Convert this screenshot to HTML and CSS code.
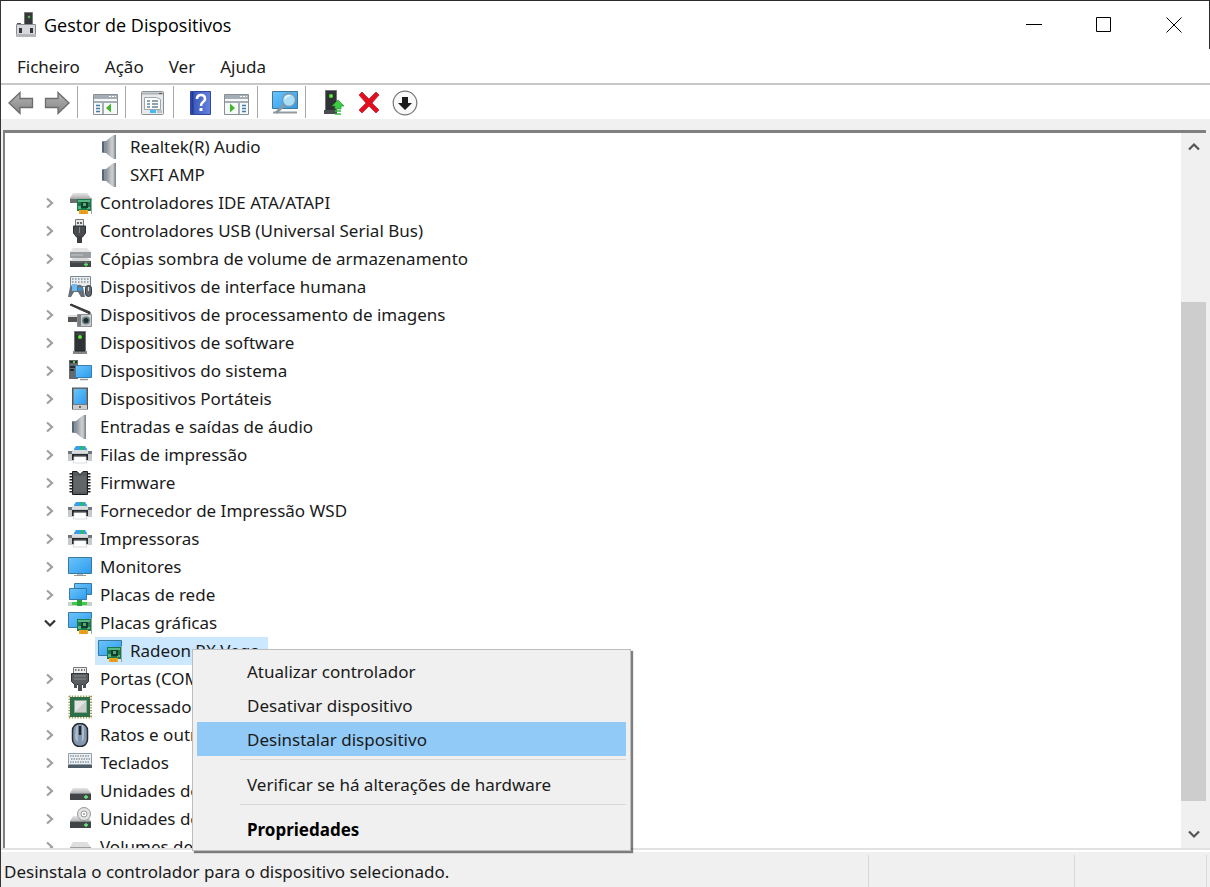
FILE: index.html
```
<!DOCTYPE html>
<html lang="pt">
<head>
<meta charset="utf-8">
<title>Gestor de Dispositivos</title>
<link rel="stylesheet" href="styles.css">
</head>
<body>
<svg class="defs" aria-hidden="true">
  <defs>
    <linearGradient id="gScreen" x1="0" y1="0" x2="1" y2="1"><stop offset="0" stop-color="#6cc4fa"/><stop offset="1" stop-color="#2b9cf0"/></linearGradient>
    <linearGradient id="gMetal" x1="0" y1="0" x2="1" y2="0"><stop offset="0" stop-color="#8a9096"/><stop offset=".6" stop-color="#cdd0d3"/><stop offset="1" stop-color="#9da1a6"/></linearGradient>
    <linearGradient id="gArrow" x1="0" y1="0" x2="0" y2="1"><stop offset="0" stop-color="#b4b4b4"/><stop offset="1" stop-color="#858585"/></linearGradient>
    <linearGradient id="gHelp" x1="0" y1="0" x2="1" y2="0"><stop offset="0" stop-color="#3552b4"/><stop offset="1" stop-color="#6484e0"/></linearGradient>
    <linearGradient id="gDisk" x1="0" y1="0" x2="0" y2="1"><stop offset="0" stop-color="#e6e6e6"/><stop offset="1" stop-color="#b5b5b5"/></linearGradient>
  </defs>
  <symbol id="speaker" viewBox="0 0 24 24">
    <path d="M4 6h6v12H4z" fill="#8792a0"/><path d="M4 7h2v10H4z" fill="#566474"/>
    <path d="M8 6 14 1l2-1h2v24h-2l-2-1-6-5z" fill="url(#gMetal)"/><path d="M16.500 0H18v24h-1.500z" fill="#878b90"/>
  </symbol>
  <symbol id="card" viewBox="0 0 24 24">
    <path d="M9 8h15v12H9z" fill="#1c7a4a"/><path d="M10 9h12v2H10zM10 15h3v3h-3zM19 16h3v2h-3z" fill="#56b884"/>
    <path d="M13 11h7v6h-7z" fill="#123e2c"/><path d="M15 12h3v3h-3z" fill="#58a47c"/>
    <path d="M11 19h9v4h-9z" fill="#f0a51d"/><path d="M14 20v3M17 20v3" stroke="#b87911" stroke-width=".6"/><path d="M23 7h1v16h-1z" fill="#9ca5a0"/>
  </symbol>
  <symbol id="ide" viewBox="0 0 24 24">
    <path d="M5 2h14l4 5H2z" fill="url(#gDisk)"/><path d="M2 7h21v5H2z" fill="#6b6e70"/><path d="M2 7h21v1H2z" fill="#aaa"/><use href="#card"/>
  </symbol>
  <symbol id="usb" viewBox="0 0 24 24">
    <path d="M7.500.5h8v7h-8z" fill="#e8e8e8" stroke="#777"/><path d="M9 3h2v2H9zM12 3h2v2h-2z" fill="#666"/>
    <path d="M5.500 7h12v7l-3 4h-6l-3-4z" fill="#484b50" stroke="#2d2f33"/><path d="M9 18h5v6H9z" fill="#3c3e42"/><path d="M11.500 8v6" stroke="#888"/>
  </symbol>
  <symbol id="storage" viewBox="0 0 24 24">
    <path d="M5 1h14l4 4H2z" fill="#e4e4e4"/><path d="M2 5h21v6H2z" fill="#999da0"/><path d="M3 8h12" stroke="#c5c7c8"/>
    <path d="M5 11h14l4 3H2z" fill="#d9d9d9"/><path d="M2 14h21v6H2z" fill="#414547"/><path d="M3 15h19" stroke="#70777a"/><path d="M16 17.500h4M18 15.500v4" stroke="#5be36d" stroke-width="1.300"/>
  </symbol>
  <symbol id="hid" viewBox="0 0 24 24">
    <path d="M2.500 1.500h20v10h-20z" fill="#ececec" stroke="#75899a"/><path d="M4 4h17M4 7h17" stroke="#81919c" stroke-width="1.600" stroke-dasharray="1.500 1.500"/>
    <path d="M2 12q3-4 6-1 4-3 7 1l2 10h-4l-3-5H6l-3 5H0z" fill="#666e77"/><path d="M4 9h5v7H4z" fill="#69bdf4"/><circle cx="12" cy="14" r="2" fill="#3896dc"/>
    <rect x="17.500" y="10.500" width="6" height="11" rx="3" fill="#616870" stroke="#30363c"/><path d="M20.500 12v4" stroke="#d0d6dc"/>
  </symbol>
  <symbol id="imaging" viewBox="0 0 24 24">
    <path d="M3 1 22 9v2L2 2z" fill="#444" stroke="#333"/><path d="M0 14h10v5H0z" fill="#555"/><path d="M0 13h11" stroke="#ddd" stroke-width="2"/>
    <path d="M9.500 11.500h14v12h-14z" fill="#c7cacb" stroke="#8b8e90"/><path d="M10 12h3v11h-3z" fill="#777d80"/><circle cx="18" cy="17.500" r="4" fill="#707d7f"/><circle cx="18" cy="17.500" r="2.500" fill="#193037"/><path d="M21 13h2" stroke="#eee"/>
  </symbol>
  <symbol id="tower" viewBox="0 0 24 24">
    <path d="M6.500.5h11v20h-11z" fill="#303336" stroke="#717476"/><path d="M8 3h8" stroke="#555"/><circle cx="12" cy="6" r="2" fill="#54ea39"/><path d="M5 20h14v3H5z" fill="#85888a"/><path d="M7 20h10" stroke="#222"/>
  </symbol>
  <symbol id="system" viewBox="0 0 24 24">
    <path d="M1 1h9v19H1z" fill="#65696c"/><path d="M2 3h7M2 8h5M2 11h4" stroke="#25292c" stroke-width="2"/><path d="M5 3h2" stroke="#51d64c" stroke-width="2"/>
    <path d="M7.500 6.500h16v12h-16z" fill="url(#gScreen)" stroke="#397eaf"/><path d="M12 20.500h8" stroke="#8f979c" stroke-width="1.500"/>
  </symbol>
  <symbol id="portable" viewBox="0 0 24 24">
    <rect x="4.500" y="1" width="15" height="21" fill="#777b80" stroke="#51565b"/><path d="M6 2h12v15H6z" fill="url(#gScreen)"/><path d="M5 18h14v4H5z" fill="#ccc"/><path d="M11 19h2v2h-2z" fill="#666"/>
  </symbol>
  <symbol id="printer" viewBox="0 0 24 24">
    <path d="M6 6 8 3h9l2 3v2H6z" fill="#3c9cec"/><path d="M12 3h4v5h-4z" fill="#2fb67b"/>
    <path d="M0 8h24v10H0z" fill="#c6cacc"/><path d="M0 8h4v3H0zM20 8h4v3h-4z" fill="#70767a"/><path d="M4 7h16v3H4z" fill="#dadddf"/>
    <path d="M4 11h16v6h-2v-3H6v3H4z" fill="#25292b"/><path d="M6 13h12v4l1 3H5l1-3z" fill="#fff" stroke="#d0d4d5" stroke-width=".8"/><path d="M5 13h14" stroke="#25292b"/>
  </symbol>
  <symbol id="chip" viewBox="0 0 24 24">
    <path d="M3 2v21M21 2v21" stroke="#222" stroke-width="3" stroke-dasharray="1.600 1.400"/><path d="M4.500.5H9l3 3 3-3h4.500v23h-15z" fill="#55585b" stroke="#191b1d"/><path d="M6 5h12v16H6z" fill="#626568"/>
  </symbol>
  <symbol id="monitor" viewBox="0 0 24 24">
    <path d="M.5 2.500h23v16H.5z" fill="url(#gScreen)" stroke="#3b789d"/><path d="M9 19.500h6" stroke="#bbb"/><path d="M6 20.500h12" stroke="#92999c"/>
  </symbol>
  <symbol id="network" viewBox="0 0 24 24">
    <path d="M6.500.5h17v11h-17z" fill="url(#gScreen)" stroke="#39789f"/><path d="M1.500 5.500h17v11h-17z" fill="url(#gScreen)" stroke="#39789f"/>
    <path d="M0 19h24v4H0z" fill="#c7d2ca"/><path d="M4 19h15v3H4z" fill="#3bcb47"/><path d="M9 17h5v6H9z" fill="#29a438"/>
  </symbol>
  <symbol id="display" viewBox="0 0 24 24">
    <path d="M.5 1.500h23v15H.5z" fill="url(#gScreen)" stroke="#3b789d"/><use href="#card"/>
  </symbol>
  <symbol id="port" viewBox="0 0 24 24">
    <path d="M5.500.5h13v6h-13z" fill="#eee" stroke="#777"/><path d="M7 3h10" stroke="#777" stroke-width="2" stroke-dasharray="1.500 1.500"/>
    <path d="M3.500 6.500h17v8l-3 3h-11l-3-3z" fill="#5a5d60" stroke="#333"/><path d="M6 9h12M6 12h12" stroke="#898c8f"/><path d="M6 17h3v4H6zM15 17h3v4h-3zM10 17h4v7h-4z" fill="#4c4f52"/>
  </symbol>
  <symbol id="cpu" viewBox="0 0 24 24">
    <path d="M1 1.500h23M1 22.500h23M1.500 1v22M23 1v22" stroke="#a59a51" stroke-width="2" stroke-dasharray="1.300 1.500"/><path d="M2 2h20v20H2z" fill="#2c6f49"/><path d="M6.500 5.500h12v12h-12z" fill="#e4e5e3" stroke="#8bab97"/><path d="m7 17 11-11v11z" fill="#c9cecb"/>
  </symbol>
  <symbol id="mouse" viewBox="0 0 24 24">
    <rect x="4.500" y=".5" width="15" height="23" rx="7" fill="#8297ad" stroke="#25282d" stroke-width="1.500"/><path d="M8 4q1-2 2-2v17q-3-2-3-5zM14 2q2 0 2 3v9q0 3-2 5z" fill="#acbccd"/><path d="M12 3v9" stroke="#20252b" stroke-width="2.500"/>
  </symbol>
  <symbol id="keyboard" viewBox="0 0 24 24">
    <path d="M.5 2.500h23v11H.5z" fill="#edf0f2" stroke="#93a0a9"/><path d="M2 5h20M3 8h19M2 11h20" stroke="#8798a4" stroke-width="1.500" stroke-dasharray="1.500 1"/><path d="M0 14h24v3H0z" fill="#4c5b66"/>
  </symbol>
  <symbol id="drive" viewBox="0 0 24 24">
    <path d="M5 9h14l4 5H2z" fill="url(#gDisk)"/><path d="M2 14h21v7H2z" fill="#424548"/><path d="M2 14.500h21" stroke="#858a8c"/><path d="M16 18h4M18 16v4" stroke="#6af37b" stroke-width="1.300"/>
  </symbol>
  <symbol id="optical" viewBox="0 0 24 24">
    <use href="#drive"/><circle cx="16" cy="7" r="6.500" fill="#e1e3e4" stroke="#999"/><circle cx="16" cy="7" r="3" fill="#fff" stroke="#999"/><circle cx="16" cy="7" r="1" fill="#999"/>
  </symbol>
  <symbol id="volume" viewBox="0 0 24 24">
    <path d="M5 7h14l4 5H2z" fill="#dedede"/><path d="M2 12h21v8H2z" fill="#9b9fa1"/>
  </symbol>
  <symbol id="right" viewBox="0 0 12 12"><path d="m3 1.500 5 4.500-5 4.500" fill="none" stroke="currentColor" stroke-width="2.200"/></symbol>
  <symbol id="down" viewBox="0 0 12 12"><path d="m1 3.500 5 5 5-5" fill="none" stroke="currentColor" stroke-width="2.200"/></symbol>
</svg>

<div class="window">
  <header class="titlebar">
    <svg class="app-icon" viewBox="0 0 22 26" aria-hidden="true">
      <path d="M9.500.5h8v13h-8z" fill="#343839" stroke="#777"/><circle cx="14" cy="5" r="1.300" fill="#4db64f"/>
      <path d="M2 11h4v3H2z" fill="#555"/><path d="M1.500 12.500h19v12h-19z" fill="#d8d9dc" stroke="#8a8b90"/><path d="M1 22h20v3H1z" fill="#b5b6bb"/><path d="M4 16h3v5H4zM15 16h3v5h-3z" fill="#33363a"/>
    </svg>
    <h1 class="title">Gestor de Dispositivos</h1>
    <div class="controls">
      <button class="control" aria-label="Minimizar"><svg viewBox="0 0 16 16"><path d="M0 7.500h16"/></svg></button>
      <button class="control" aria-label="Maximizar"><svg viewBox="0 0 16 16"><path d="M.5.500h14v14H.500z"/></svg></button>
      <button class="control" aria-label="Fechar"><svg viewBox="0 0 16 16"><path d="m.5.500 15 15M15.500.500l-15 15"/></svg></button>
    </div>
  </header>

  <nav class="menubar">
    <button class="menu">Ficheiro</button>
    <button class="menu">Ação</button>
    <button class="menu">Ver</button>
    <button class="menu">Ajuda</button>
  </nav>

  <div class="toolbar" role="toolbar">
    <button class="tool" aria-label="Retroceder"><svg viewBox="0 0 26 26"><path d="M1 13 12 2.500v6h12.500v9H12v6z" fill="url(#gArrow)" stroke="#6c6c6c" stroke-width="1.300"/></svg></button>
    <button class="tool" aria-label="Avançar"><svg viewBox="0 0 26 26"><path d="M25 13 14 2.500v6H1.500v9H14v6z" fill="url(#gArrow)" stroke="#6c6c6c" stroke-width="1.300"/></svg></button>
    <span class="divider"></span>
    <button class="tool" aria-label="Mostrar árvore"><svg viewBox="0 0 26 26"><path d="M1.500 4.500h24v20h-24z" fill="#f7f8f8" stroke="#888f96"/><path d="M2 5h23v4H2z" fill="#a5adb5"/><path d="M17 6.500h2M20 6.500h2M23 6.500h1" stroke="#fff"/><path d="M2 11h23v2H2zM10 12h2v12h-2z" fill="#a5adb5"/><path d="M4 15.500h4M4 18.500h4M4 21.500h4" stroke="#427da5" stroke-width="1.400"/><path d="M19 13.500v9L14 18z" fill="#43b52e"/></svg></button>
    <span class="divider"></span>
    <button class="tool" aria-label="Propriedades"><svg viewBox="0 0 26 26"><rect x="1.500" y="1.500" width="22" height="23" rx="1" fill="#e7e9ea" stroke="#8a9096"/><path d="M2 3.500h21" stroke="#aab1b7" stroke-width="2"/><path d="M19 3.500h3" stroke="#555"/><path d="M4.500 7.500h12l4 2v10h-16z" fill="#fff" stroke="#9ba6ae"/><path d="M7 11h3M12 11h6M7 14h3M12 14h6M7 17h3M12 17h6" stroke="#6a8296" stroke-width="1.300"/><path d="M10 20h6v3h-6z" fill="#43baf0"/><path d="M17 20h5v3h-5z" fill="#bcc3c8"/></svg></button>
    <span class="divider"></span>
    <button class="tool" aria-label="Ajuda"><svg viewBox="0 0 26 26"><path d="M2.500 1.500h20v23h-20z" fill="url(#gHelp)" stroke="#34489b"/><path d="M4.500 2v22" stroke="#1e3c99" stroke-width="2"/><path d="M9 9q0-4 4-4t4 4q0 2-2 3-2 1.500-2 4" fill="none" stroke="#fff" stroke-width="2.600"/><path d="M11.500 18h3v3h-3z" fill="#fff"/></svg></button>
    <button class="tool" aria-label="Mostrar painel de ações"><svg viewBox="0 0 26 26"><path d="M.5 4.500h24v20H.5z" fill="#f7f8f8" stroke="#888f96"/><path d="M1 5h23v4H1z" fill="#a5adb5"/><path d="M16 6.500h2M19 6.500h2M22 6.500h1" stroke="#fff"/><path d="M1 11h23v2H1zM14 12h2v12h-2z" fill="#a5adb5"/><path d="M18 15.500h4M18 18.500h4M18 21.500h4" stroke="#427da5" stroke-width="1.400"/><path d="M6 13.500v9l5-4.500z" fill="#43b52e"/></svg></button>
    <span class="divider"></span>
    <button class="tool" aria-label="Procurar alterações de hardware"><svg viewBox="0 0 26 26"><path d="M.5 1.500h25v17H.5z" fill="url(#gScreen)" stroke="#407894"/><path d="M1 22.500h24" stroke="#949a9e" stroke-width="2"/><path d="m12 15-8 8" stroke="#8998a2" stroke-width="3"/><circle cx="17" cy="10" r="6.500" fill="#a9def6" stroke="#7994a6" stroke-width="1.300"/><path d="M13 9q1-4 5-3" fill="none" stroke="#e5f8ff" stroke-width="1.500"/></svg></button>
    <span class="divider"></span>
    <button class="tool" aria-label="Atualizar controlador"><svg viewBox="0 0 26 26"><path d="M5.500.500h11v20h-11z" fill="#303336" stroke="#717476"/><circle cx="11" cy="6" r="2" fill="#54ea39"/><path d="M4 20h13v4H4z" fill="#4a4d50"/><path d="m18 10 6 6h-3v3h-6v-3h-3z" fill="#3ccc43" stroke="#279230" stroke-width=".7"/><path d="M15 21h6M15 24h6" stroke="#36bd3c" stroke-width="1.600"/></svg></button>
    <button class="tool" aria-label="Desinstalar dispositivo"><svg viewBox="0 0 26 26"><path d="m3 5 3-3 7 7 7-7 3 3-7 8 7 7-3 3-7-7-7 7-3-3 7-7z" fill="#e11020" stroke="#bc1621" stroke-width=".7"/></svg></button>
    <button class="tool" aria-label="Desativar dispositivo"><svg viewBox="0 0 26 26"><circle cx="13" cy="13" r="11.800" fill="#f8f8f8" stroke="#74777a" stroke-width="1.200"/><path d="M10 7h6v6h4l-7 7-7-7h4z" fill="#1b1b1b"/></svg></button>
  </div>

  <main class="pane">
    <ul class="tree" role="tree">
      <li class="row child"><svg class="icon"><use href="#speaker"/></svg><span class="label">Realtek(R) Audio</span></li>
      <li class="row child"><svg class="icon"><use href="#speaker"/></svg><span class="label">SXFI AMP</span></li>
      <li class="row"><button class="toggle" aria-label="Expandir"><svg><use href="#right"/></svg></button><svg class="icon"><use href="#ide"/></svg><span class="label">Controladores IDE ATA/ATAPI</span></li>
      <li class="row"><button class="toggle" aria-label="Expandir"><svg><use href="#right"/></svg></button><svg class="icon"><use href="#usb"/></svg><span class="label">Controladores USB (Universal Serial Bus)</span></li>
      <li class="row"><button class="toggle" aria-label="Expandir"><svg><use href="#right"/></svg></button><svg class="icon"><use href="#storage"/></svg><span class="label">Cópias sombra de volume de armazenamento</span></li>
      <li class="row"><button class="toggle" aria-label="Expandir"><svg><use href="#right"/></svg></button><svg class="icon"><use href="#hid"/></svg><span class="label">Dispositivos de interface humana</span></li>
      <li class="row"><button class="toggle" aria-label="Expandir"><svg><use href="#right"/></svg></button><svg class="icon"><use href="#imaging"/></svg><span class="label">Dispositivos de processamento de imagens</span></li>
      <li class="row"><button class="toggle" aria-label="Expandir"><svg><use href="#right"/></svg></button><svg class="icon"><use href="#tower"/></svg><span class="label">Dispositivos de software</span></li>
      <li class="row"><button class="toggle" aria-label="Expandir"><svg><use href="#right"/></svg></button><svg class="icon"><use href="#system"/></svg><span class="label">Dispositivos do sistema</span></li>
      <li class="row"><button class="toggle" aria-label="Expandir"><svg><use href="#right"/></svg></button><svg class="icon"><use href="#portable"/></svg><span class="label">Dispositivos Portáteis</span></li>
      <li class="row"><button class="toggle" aria-label="Expandir"><svg><use href="#right"/></svg></button><svg class="icon"><use href="#speaker"/></svg><span class="label">Entradas e saídas de áudio</span></li>
      <li class="row"><button class="toggle" aria-label="Expandir"><svg><use href="#right"/></svg></button><svg class="icon"><use href="#printer"/></svg><span class="label">Filas de impressão</span></li>
      <li class="row"><button class="toggle" aria-label="Expandir"><svg><use href="#right"/></svg></button><svg class="icon"><use href="#chip"/></svg><span class="label">Firmware</span></li>
      <li class="row"><button class="toggle" aria-label="Expandir"><svg><use href="#right"/></svg></button><svg class="icon"><use href="#printer"/></svg><span class="label">Fornecedor de Impressão WSD</span></li>
      <li class="row"><button class="toggle" aria-label="Expandir"><svg><use href="#right"/></svg></button><svg class="icon"><use href="#printer"/></svg><span class="label">Impressoras</span></li>
      <li class="row"><button class="toggle" aria-label="Expandir"><svg><use href="#right"/></svg></button><svg class="icon"><use href="#monitor"/></svg><span class="label">Monitores</span></li>
      <li class="row"><button class="toggle" aria-label="Expandir"><svg><use href="#right"/></svg></button><svg class="icon"><use href="#network"/></svg><span class="label">Placas de rede</span></li>
      <li class="row"><button class="toggle open" aria-label="Fechar"><svg><use href="#down"/></svg></button><svg class="icon"><use href="#display"/></svg><span class="label">Placas gráficas</span></li>
      <li class="row child selected"><svg class="icon"><use href="#display"/></svg><span class="label">Radeon RX Vega</span></li>
      <li class="row"><button class="toggle" aria-label="Expandir"><svg><use href="#right"/></svg></button><svg class="icon"><use href="#port"/></svg><span class="label">Portas (COM</span></li>
      <li class="row"><button class="toggle" aria-label="Expandir"><svg><use href="#right"/></svg></button><svg class="icon"><use href="#cpu"/></svg><span class="label">Processadores</span></li>
      <li class="row"><button class="toggle" aria-label="Expandir"><svg><use href="#right"/></svg></button><svg class="icon"><use href="#mouse"/></svg><span class="label">Ratos e outros</span></li>
      <li class="row"><button class="toggle" aria-label="Expandir"><svg><use href="#right"/></svg></button><svg class="icon"><use href="#keyboard"/></svg><span class="label">Teclados</span></li>
      <li class="row"><button class="toggle" aria-label="Expandir"><svg><use href="#right"/></svg></button><svg class="icon"><use href="#drive"/></svg><span class="label">Unidades de</span></li>
      <li class="row"><button class="toggle" aria-label="Expandir"><svg><use href="#right"/></svg></button><svg class="icon"><use href="#optical"/></svg><span class="label">Unidades de</span></li>
      <li class="row"><button class="toggle" aria-label="Expandir"><svg><use href="#right"/></svg></button><svg class="icon"><use href="#volume"/></svg><span class="label">Volumes de</span></li>
    </ul>
    <div class="scrollbar">
      <button class="scroll-button up" aria-label="Para cima"><svg><use href="#down"/></svg></button>
      <div class="track"><div class="thumb"></div></div>
      <button class="scroll-button" aria-label="Para baixo"><svg><use href="#down"/></svg></button>
    </div>
  </main>

  <footer class="statusbar">
    <span class="status-text">Desinstala o controlador para o dispositivo selecionado.</span>
    <span class="cell"></span>
    <span class="cell last"></span>
  </footer>

  <div class="context-menu" role="menu">
    <button class="item" role="menuitem">Atualizar controlador</button>
    <button class="item" role="menuitem">Desativar dispositivo</button>
    <button class="item active" role="menuitem">Desinstalar dispositivo</button>
    <hr class="separator">
    <button class="item" role="menuitem">Verificar se há alterações de hardware</button>
    <hr class="separator">
    <button class="item default" role="menuitem">Propriedades</button>
  </div>
</div>
</body>
</html>
```
FILE: styles.css
```
* {
  box-sizing: border-box;
}

body {
  margin: 0;
  background: #fff;
  color: #1a1a1a;
  font-family: "Noto Sans", "Open Sans", sans-serif;
  font-size: 17px;
  line-height: 24px;
}

button {
  margin: 0;
  padding: 0;
  border: 0;
  background: none;
  color: inherit;
  font: inherit;
}

.defs {
  position: absolute;
  width: 0;
  height: 0;
}

.window {
  position: relative;
  display: flex;
  flex-direction: column;
  height: 100vh;
  overflow: hidden;
  border-top: 1px solid #2b2b2b;
  border-left: 1px solid #3a3533;
}

.titlebar {
  display: flex;
  align-items: center;
  height: 48px;
  padding-left: 14px;
  border-right: 1px solid #2b2b2b;
}

.app-icon {
  width: 22px;
  height: 26px;
}

.title {
  flex: 1;
  margin: 0 0 0 7px;
  color: #000;
  font-family: "Open Sans", "Noto Sans", sans-serif;
  font-size: 18px;
  font-weight: 400;
}

.controls {
  display: flex;
}

.control {
  width: 70px;
  height: 48px;
}

.control svg {
  display: block;
  width: 16px;
  height: 16px;
  margin: auto;
  fill: none;
  stroke: #000;
}

.menubar {
  display: flex;
  gap: 25px;
  height: 36px;
  padding: 2px 16px 0;
  border-bottom: 2px solid #c8c8c8;
}

.toolbar {
  display: flex;
  align-items: center;
  height: 34px;
  padding-left: 2px;
}

.tool {
  width: 36px;
  height: 34px;
  padding-top: 2px;
}

.tool svg {
  display: block;
  width: 26px;
  height: 26px;
  margin: auto;
}

.divider {
  width: 12px;
  height: 32px;
  margin: 0 -2px 0 2px;
  border-left: 1px solid #a8a8a8;
}

.pane {
  display: flex;
  flex: 1;
  min-height: 0;
  border-top: 11px solid #f0f0f0;
  border-right: 4px solid #f0f0f0;
  border-left: 2px solid #f0f0f0;
}

.tree {
  flex: 1;
  margin: 0;
  padding: 0;
  overflow: hidden;
  border-top: 3px solid #808080;
  border-left: 2px solid #808080;
  list-style: none;
}

.row {
  display: flex;
  align-items: center;
  height: 28px;
  padding-left: 35px;
  white-space: nowrap;
}

.toggle {
  width: 20px;
  height: 20px;
  margin-right: 8px;
  color: #a0a0a0;
}

.toggle.open {
  color: #333;
}

.toggle svg,
.scroll-button svg {
  display: block;
  width: 12px;
  height: 12px;
  margin: auto;
}

.icon {
  flex: none;
  width: 24px;
  height: 24px;
}

.label {
  margin-left: 8px;
}

.row.child {
  width: max-content;
  margin-left: 90px;
  padding-left: 3px;
  padding-right: 8px;
}

.selected {
  background: #cce8ff;
}

.scrollbar {
  display: flex;
  flex-direction: column;
  width: 25px;
  border-top: 3px solid #808080;
  background: #f0f0f0;
}

.scroll-button {
  height: 28px;
  color: #555;
}

.up svg {
  transform: rotate(180deg);
}

.track {
  display: flex;
  flex: 1;
  flex-direction: column;
  justify-content: flex-end;
  padding-bottom: 19px;
}

.thumb {
  height: 78%;
  background: #cdcdcd;
}

.statusbar {
  display: flex;
  height: 39px;
  padding: 5px 3px 0;
  border-top: 2px solid #e2e2e2;
  background: #f0f0f0;
  box-shadow: inset 0 2px #fff;
}

.status-text {
  flex: 1;
  padding-top: 5px;
}

.cell {
  width: 206px;
  border-left: 1px solid #d9d9d9;
}

.cell.last {
  width: 133px;
  border-right: 1px solid #d9d9d9;
}

.context-menu {
  position: absolute;
  top: 648px;
  left: 191px;
  width: 439px;
  padding: 4px;
  border: 1px solid #bdbdbd;
  background: #f0f0f0;
  box-shadow: 2px 2px 1px rgba(0, 0, 0, 0.5);
}

.item {
  display: block;
  width: 100%;
  height: 34px;
  padding: 2px 0 0 50px;
  text-align: left;
}

.item.active {
  background: #91c9f7;
}

.item.default {
  color: #000;
  font-weight: 700;
}

.separator {
  height: 1px;
  margin: 3px 0 7px 43px;
  border: 0;
  background: #d7d7d7;
}
```
